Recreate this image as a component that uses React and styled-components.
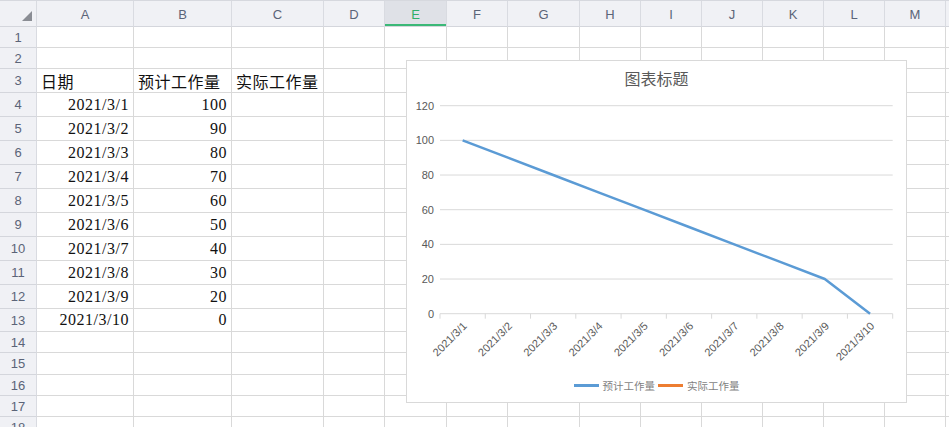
import React from "react"
import styled, { createGlobalStyle } from "styled-components"

const GlobalStyle = createGlobalStyle`
  html, body {
    margin: 0;
    padding: 0;
    background: #ffffff;
    overflow: hidden;
  }
`

const columns = [
  { key: "A", width: 97 },
  { key: "B", width: 98 },
  { key: "C", width: 92 },
  { key: "D", width: 61 },
  { key: "E", width: 62 },
  { key: "F", width: 61 },
  { key: "G", width: 72 },
  { key: "H", width: 61 },
  { key: "I", width: 61 },
  { key: "J", width: 61 },
  { key: "K", width: 61 },
  { key: "L", width: 61 },
  { key: "M", width: 61 },
  { key: "N", width: 61, hidden: true },
]

const rowHeights = [21, 21, 24, 24, 24, 24, 24, 24, 24, 24, 24, 24, 23, 21, 22, 21, 21, 21]

const dates = [
  "2021/3/1",
  "2021/3/2",
  "2021/3/3",
  "2021/3/4",
  "2021/3/5",
  "2021/3/6",
  "2021/3/7",
  "2021/3/8",
  "2021/3/9",
  "2021/3/10",
]
const planned = [100, 90, 80, 70, 60, 50, 40, 30, 20, 0]

// row number -> { A, B, C }
const cells = {
  3: { A: { text: "日期" }, B: { text: "预计工作量" }, C: { text: "实际工作量" } },
}
dates.forEach((d, i) => {
  cells[i + 4] = {
    A: { text: d, right: true },
    B: { text: String(planned[i]), right: true },
  }
})

const App = () => {
  return (
    <>
      <GlobalStyle />
      <Sheet
        $cols={`37px ${columns.map((c) => c.width + "px").join(" ")}`}
        $rows={`26px ${rowHeights.map((h) => h + "px").join(" ")}`}
      >
        <Corner>
          <CornerMark />
        </Corner>
        {columns.map((c) => (
          <ColHeader key={c.key} $active={c.key === "E"}>
            {c.hidden ? "" : c.key}
          </ColHeader>
        ))}
        {rowHeights.map((h, r) => {
          const row = r + 1
          return (
            <React.Fragment key={row}>
              <RowHeader>{row}</RowHeader>
              {columns.map((c) => {
                const cell = cells[row] && cells[row][c.key]
                return (
                  <Cell key={c.key} $right={cell && cell.right}>
                    {cell ? cell.text : ""}
                  </Cell>
                )
              })}
            </React.Fragment>
          )
        })}
        <LineChart />
      </Sheet>
    </>
  )
}

export default App

// chart geometry (svg coordinates)
const PLOT_LEFT = 33
const PLOT_RIGHT = 485.7
const Y_TOP = 17.7
const Y_ZERO = 225.7
const CAT_W = (PLOT_RIGHT - PLOT_LEFT) / 10
const yOf = (v) => Y_ZERO - (v / 120) * (Y_ZERO - Y_TOP)
const xOf = (i) => PLOT_LEFT + CAT_W * (i + 0.5)

const LineChart = () => {
  const ticks = [0, 20, 40, 60, 80, 100, 120]
  const points = planned.map((v, i) => `${xOf(i)},${yOf(v)}`).join(" ")
  return (
    <ChartBox>
      <ChartTitle>图表标题</ChartTitle>
      <PlotSvg width="499" height="290" viewBox="0 0 499 290">
        {ticks.map((t) => (
          <g key={t}>
            <line
              x1={PLOT_LEFT}
              x2={PLOT_RIGHT}
              y1={yOf(t)}
              y2={yOf(t)}
              stroke="#d9d9d9"
              strokeWidth="1"
            />
            <text
              x="27"
              y={yOf(t) + 4}
              textAnchor="end"
              fontSize="11"
              fill="#595959"
              fontFamily="'Liberation Sans', Arial, sans-serif"
            >
              {t}
            </text>
          </g>
        ))}
        {Array.from({ length: 11 }).map((_, k) => (
          <line
            key={k}
            x1={PLOT_LEFT + CAT_W * k}
            x2={PLOT_LEFT + CAT_W * k}
            y1={Y_ZERO}
            y2={Y_ZERO + 5}
            stroke="#d9d9d9"
            strokeWidth="1"
          />
        ))}
        {dates.map((d, i) => {
          const ax = xOf(i) + 5
          const ay = Y_ZERO + 13
          return (
            <text
              key={d}
              x={ax}
              y={ay}
              textAnchor="end"
              fontSize="11"
              fill="#595959"
              fontFamily="'Liberation Sans', Arial, sans-serif"
              transform={`rotate(-45 ${ax} ${ay})`}
            >
              {d}
            </text>
          )
        })}
        <polyline
          points={points}
          fill="none"
          stroke="#5b9bd5"
          strokeWidth="2.5"
          strokeLinejoin="round"
        />
      </PlotSvg>
      <Legend>
        <LegendItem>
          <LegendLine $color="#5b9bd5" />
          预计工作量
        </LegendItem>
        <LegendItem>
          <LegendLine $color="#ed7d31" />
          实际工作量
        </LegendItem>
      </Legend>
    </ChartBox>
  )
}

const Sheet = styled.div`
  position: relative;
  display: grid;
  grid-template-columns: ${(p) => p.$cols};
  grid-template-rows: ${(p) => p.$rows};
  width: max-content;
  border-top: 1px solid #d6d8de;
`

const headerBase = `
  box-sizing: border-box;
  background: #f0f1f5;
  color: #5b6478;
  font-family: "Liberation Sans", Arial, sans-serif;
  font-size: 13px;
  display: flex;
  align-items: center;
  justify-content: center;
  border-right: 1px solid #d9dbe1;
  border-bottom: 1px solid #d4d6dc;
`

const Corner = styled.div`
  ${headerBase};
  position: relative;
`

const CornerMark = styled.div`
  position: absolute;
  left: 22px;
  top: 10px;
  width: 0;
  height: 0;
  border-left: 10px solid transparent;
  border-bottom: 10px solid #8a8d94;
`

const ColHeader = styled.div`
  ${headerBase};
  padding-top: 1px;
  background: ${(p) => (p.$active ? "#dfe1e7" : "#f0f1f5")};
  color: ${(p) => (p.$active ? "#2fae6a" : "#5b6478")};
  box-shadow: ${(p) => (p.$active ? "inset 0 -2px 0 #3bb877" : "none")};
`

const RowHeader = styled.div`
  ${headerBase};
  font-size: 13px;
`

const Cell = styled.div`
  box-sizing: border-box;
  border-right: 1px solid #d9d9d9;
  border-bottom: 1px solid #d9d9d9;
  display: flex;
  align-items: center;
  justify-content: ${(p) => (p.$right ? "flex-end" : "flex-start")};
  padding: 0 4px;
  font-family: "Liberation Serif", "Noto Sans CJK SC", serif;
  font-size: 16px;
  letter-spacing: 0.5px;
  color: #111111;
  white-space: nowrap;
  overflow: visible;
`

const ChartBox = styled.div`
  position: absolute;
  left: 406px;
  top: 59px;
  width: 501px;
  height: 343px;
  box-sizing: border-box;
  border: 1px solid #d9d9d9;
  background: #ffffff;
  display: flex;
  flex-direction: column;
`

const ChartTitle = styled.div`
  height: 27px;
  box-sizing: border-box;
  padding-top: 7px;
  line-height: 20px;
  text-align: center;
  font-family: "Noto Sans CJK SC", sans-serif;
  font-size: 16px;
  color: #595959;
`

const PlotSvg = styled.svg`
  display: block;
`

const Legend = styled.div`
  display: flex;
  justify-content: center;
  align-items: center;
  gap: 3px;
  height: 14px;
  font-family: "Noto Sans CJK SC", sans-serif;
  font-size: 10.5px;
  color: #7f7f7f;
`

const LegendItem = styled.div`
  display: flex;
  align-items: center;
  gap: 4px;
`

const LegendLine = styled.span`
  display: inline-block;
  width: 25px;
  height: 3px;
  background: ${(p) => p.$color};
`
